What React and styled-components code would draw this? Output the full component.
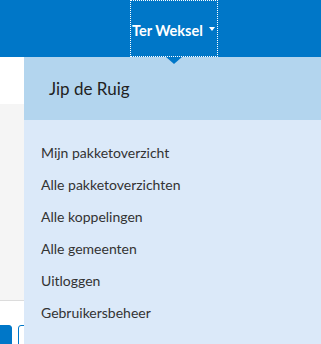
import React from 'react';
import styled, { createGlobalStyle } from 'styled-components';

const GlobalStyle = createGlobalStyle`
  html, body { margin: 0; padding: 0; }
  body {
    font-family: Lato, "Open Sans", sans-serif;
    background: #fff;
    overflow: hidden;
  }
`;

const Page = styled.div`
  position: relative;
  width: 321px;
  height: 344px;
  overflow: hidden;
`;

const TopBar = styled.header`
  display: flex;
  justify-content: flex-end;
  height: 57px;
  padding-right: 103px;
  background: #0077c8;
  box-sizing: border-box;
`;

const Toggle = styled.a`
  position: relative;
  display: flex;
  align-items: center;
  gap: 6px;
  width: 88px;
  padding: 3px 0 0 2px;
  box-sizing: border-box;
  outline: 1px dotted #fff;
  outline-offset: -1px;
  color: #fff;
  font-size: 14.5px;
  font-weight: 700;
  white-space: nowrap;
  text-decoration: none;
`;

const Caret = styled.span`
  flex-shrink: 0;
  width: 0;
  height: 0;
  border-left: 3.5px solid transparent;
  border-right: 3.5px solid transparent;
  border-top: 4px solid #fff;
  margin-top: -2px;
`;

const Pointer = styled.span`
  position: absolute;
  left: 50%;
  bottom: -7px;
  margin-left: -8px;
  width: 0;
  height: 0;
  border-left: 8px solid transparent;
  border-right: 8px solid transparent;
  border-top: 7px solid #0077c8;
  z-index: 3;
`;

const Content = styled.main`
  display: flex;
  flex-direction: column;
`;

const WhiteStrip = styled.div`
  height: 47px;
`;

const GrayPanel = styled.div`
  height: 196px;
  background: #f5f5f5;
  border-bottom: 1px solid #dcdcdc;
`;

const ButtonRow = styled.div`
  display: flex;
  gap: 6px;
  padding-top: 24px;
  margin-left: -20px;
`;

const Button = styled.button`
  display: flex;
  align-items: flex-end;
  justify-content: flex-end;
  width: ${p => (p.$primary ? '32px' : '60px')};
  height: 30px;
  border-radius: 3px;
  border: 1px solid #0077c8;
  background: ${p => (p.$primary ? '#0077c8' : '#fff')};
  padding: 0 9px 3px 0;
`;

const Dropdown = styled.nav`
  position: absolute;
  top: 57px;
  left: 24px;
  right: 0;
  bottom: 0;
  background: #dbe9f9;
  z-index: 2;
`;

const UserHead = styled.div`
  display: flex;
  align-items: center;
  height: 63px;
  padding-left: 25px;
  padding-bottom: 1px;
  box-sizing: border-box;
  background: #b3d5ee;
  color: #222;
  font-size: 17px;
`;

const MenuList = styled.ul`
  list-style: none;
  margin: 0;
  padding: 17px 0 0 17px;
`;

const MenuItem = styled.li`
  height: 32px;
  line-height: 32px;
  font-size: 14px;
  color: #333;
`;

const items = [
  'Mijn pakketoverzicht',
  'Alle pakketoverzichten',
  'Alle koppelingen',
  'Alle gemeenten',
  'Uitloggen',
  'Gebruikersbeheer',
];

export default function App() {
  return (
    <Page>
      <GlobalStyle />
      <TopBar>
        <Toggle href="#">
          Ter Weksel
          <Caret />
          <Pointer />
        </Toggle>
      </TopBar>
      <Content>
        <WhiteStrip />
        <GrayPanel />
        <ButtonRow>
          <Button $primary aria-label="Toevoegen">
            <svg width="8" height="8" viewBox="0 0 8 8">
              <path d="M4 0v8M0 4h8" stroke="#fff" strokeWidth="1.6" />
            </svg>
          </Button>
          <Button aria-label="Meer" />
        </ButtonRow>
      </Content>
      <Dropdown>
        <UserHead>Jip de Ruig</UserHead>
        <MenuList>
          {items.map(label => (
            <MenuItem key={label}>{label}</MenuItem>
          ))}
        </MenuList>
      </Dropdown>
    </Page>
  );
}
